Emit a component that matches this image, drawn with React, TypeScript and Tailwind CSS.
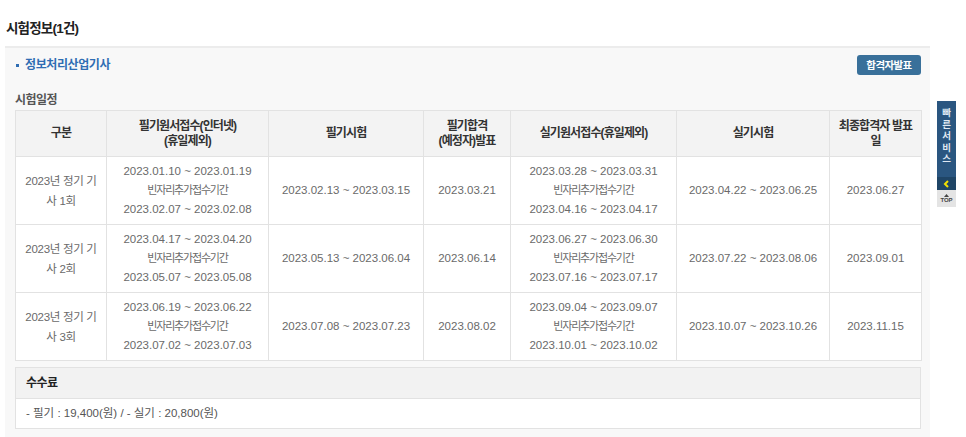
import React from "react";

const F = { fontFamily: '"Liberation Sans", "Noto Sans CJK KR", sans-serif' };

type Row = {
  name: [string, string];
  w1: [string, string];
  w2: string;
  w3: string;
  p1: [string, string];
  p2: string;
  fin: string;
};

const rows: Row[] = [
  {
    name: ["2023년 정기 기", "사 1회"],
    w1: ["2023.01.10 ~ 2023.01.19", "2023.02.07 ~ 2023.02.08"],
    w2: "2023.02.13 ~ 2023.03.15",
    w3: "2023.03.21",
    p1: ["2023.03.28 ~ 2023.03.31", "2023.04.16 ~ 2023.04.17"],
    p2: "2023.04.22 ~ 2023.06.25",
    fin: "2023.06.27",
  },
  {
    name: ["2023년 정기 기", "사 2회"],
    w1: ["2023.04.17 ~ 2023.04.20", "2023.05.07 ~ 2023.05.08"],
    w2: "2023.05.13 ~ 2023.06.04",
    w3: "2023.06.14",
    p1: ["2023.06.27 ~ 2023.06.30", "2023.07.16 ~ 2023.07.17"],
    p2: "2023.07.22 ~ 2023.08.06",
    fin: "2023.09.01",
  },
  {
    name: ["2023년 정기 기", "사 3회"],
    w1: ["2023.06.19 ~ 2023.06.22", "2023.07.02 ~ 2023.07.03"],
    w2: "2023.07.08 ~ 2023.07.23",
    w3: "2023.08.02",
    p1: ["2023.09.04 ~ 2023.09.07", "2023.10.01 ~ 2023.10.02"],
    p2: "2023.10.07 ~ 2023.10.26",
    fin: "2023.11.15",
  },
];

const th =
  "border border-[#e2e2e2] bg-[#f3f3f3] text-[12px] font-bold text-[#333] text-center leading-[15px] px-1 tracking-[-0.9px]";
const td =
  "border border-[#e2e2e2] bg-white text-[11.5px] text-[#6a6a6a] text-center leading-[19px] px-1";

function Three({ v }: { v: [string, string] }) {
  return (
    <>
      {v[0]}
      <br />
      <span className="text-[11px] tracking-[-1.2px]">빈자리추가접수기간</span>
      <br />
      {v[1]}
    </>
  );
}

export default function App() {
  return (
    <div className="relative w-[966px] h-[437px] overflow-hidden bg-white" style={F}>
      <div className="pl-[6px] pt-[20px] h-[46px] text-[13.5px] font-bold text-[#222] leading-[17px] tracking-[-0.8px]">
        시험정보(1건)
      </div>
      <div className="ml-[5px] w-[925px] bg-[#f8f8f8] border-t-2 border-[#ececec] pl-[10px] pr-[9px] pb-[20px]">
        <div className="flex items-center justify-between pt-[6px] h-[28px]">
          <div className="flex items-center text-[12px] font-bold text-[#2f6db3] tracking-[-0.4px]">
            <span className="inline-block w-[3px] h-[3px] bg-[#2f6db3] mr-[6px] ml-[1px]" />
            정보처리산업기사
          </div>
          <button className="w-[64px] h-[20px] rounded-[3px] bg-[#39709a] text-white text-[10.5px] font-bold leading-[20px] tracking-[-0.6px]">
            합격자발표
          </button>
        </div>
        <div className="pt-[17px] h-[34px] text-[12px] text-[#555] leading-[14px] tracking-[-0.5px] font-semibold">
          시험일정
        </div>
        <table className="border-collapse table-fixed w-[906px]">
          <colgroup>
            <col className="w-[91px]" />
            <col className="w-[162px]" />
            <col className="w-[155px]" />
            <col className="w-[87px]" />
            <col className="w-[166px]" />
            <col className="w-[153px]" />
            <col className="w-[92px]" />
          </colgroup>
          <thead>
            <tr className="h-[46px]">
              <th className={th}>구분</th>
              <th className={th}>
                필기원서접수(인터넷)
                <br />
                (휴일제외)
              </th>
              <th className={th}>필기시험</th>
              <th className={th}>
                필기합격
                <br />
                (예정자)발표
              </th>
              <th className={th}>실기원서접수(휴일제외)</th>
              <th className={th}>실기시험</th>
              <th className={th}>
                최종합격자 발표
                <br />일
              </th>
            </tr>
          </thead>
          <tbody>
            {rows.map((r, i) => (
              <tr key={i} className="h-[68px]">
                <td className={td + " leading-[20px] tracking-[-0.3px]"}>
                  {r.name[0]}
                  <br />
                  {r.name[1]}
                </td>
                <td className={td}>
                  <Three v={r.w1} />
                </td>
                <td className={td}>{r.w2}</td>
                <td className={td}>{r.w3}</td>
                <td className={td}>
                  <Three v={r.p1} />
                </td>
                <td className={td}>{r.p2}</td>
                <td className={td}>{r.fin}</td>
              </tr>
            ))}
          </tbody>
        </table>
        <div className="mt-[6px] w-[906px] border border-[#e2e2e2]">
          <div className="h-[31px] bg-[#f2f2f2] border-b border-[#e2e2e2] flex items-center pl-[10px] text-[12px] font-bold text-[#222] tracking-[-0.5px]">
            수수료
          </div>
          <div className="h-[29px] bg-white flex items-center pl-[10px] text-[11.5px] text-[#555]">
            - 필기 : 19,400(원) / - 실기 : 20,800(원)
          </div>
        </div>
      </div>

      <div className="absolute left-[937px] top-[101px] w-[19px] flex flex-col">
        <div className="h-[76px] bg-[#2a5680] flex flex-col items-center pt-[6px] text-[9.5px] font-bold text-[#dfe8f2] leading-[11.5px]">
          <span>빠</span>
          <span>른</span>
          <span>서</span>
          <span>비</span>
          <span>스</span>
        </div>
        <div className="h-[13px] bg-[#1f4566] flex items-center justify-center">
          <svg width="7" height="8" viewBox="0 0 7 8">
            <path d="M5 1 L2 4 L5 7" stroke="#f2e000" strokeWidth="2" fill="none" />
          </svg>
        </div>
        <div className="h-[17px] bg-[#e4e4e4] flex flex-col items-center justify-center">
          <svg width="5" height="3" viewBox="0 0 5 3">
            <path d="M0 3 L2.5 0 L5 3 Z" fill="#444" />
          </svg>
          <span className="text-[6px] font-bold text-[#444] leading-[7px]">TOP</span>
        </div>
      </div>
    </div>
  );
}
